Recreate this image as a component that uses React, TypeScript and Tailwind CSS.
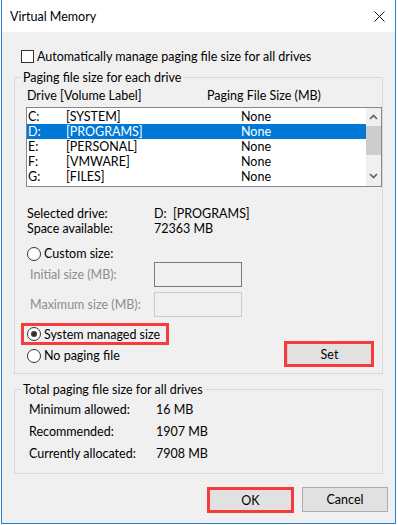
import React from "react";

const Radio = ({ checked }: { checked?: boolean }) => (
  <span className="flex items-center justify-center w-[14px] h-[14px] rounded-full border border-[#333333] bg-white shrink-0">
    {checked && <span className="w-[6px] h-[6px] rounded-full bg-[#333333]" />}
  </span>
);

const Chevron = ({ up }: { up?: boolean }) => (
  <svg width="9" height="6" viewBox="0 0 9 6" className="block">
    <path
      d={up ? "M1 5 L4.5 1.5 L8 5" : "M1 1 L4.5 4.5 L8 1"}
      fill="none"
      stroke="#606060"
      strokeWidth="1.6"
    />
  </svg>
);

const drives = [
  { d: "C:", label: "[SYSTEM]" },
  { d: "D:", label: "[PROGRAMS]" },
  { d: "E:", label: "[PERSONAL]" },
  { d: "F:", label: "[VMWARE]" },
  { d: "G:", label: "[FILES]" },
];

export default function App() {
  return (
    <div className="w-[398px] h-[525px] bg-white font-['Lato',sans-serif] text-[12.5px] leading-[15px] text-black">
      <div className="ml-[1px] w-[395px] h-[524px] border-x border-b border-[#2a7fd4] flex flex-col bg-[#f0f0f0]">
        {/* title bar */}
        <div className="h-[32px] bg-white flex items-center justify-between pl-[8px] pr-[8px] shrink-0">
          <span>Virtual Memory</span>
          <svg width="11" height="11" viewBox="0 0 11 11" className="mr-[2px]">
            <path d="M0.5 0.5 L10.5 10.5 M10.5 0.5 L0.5 10.5" stroke="#111" strokeWidth="1" />
          </svg>
        </div>

        {/* auto manage */}
        <div className="mt-[18px] ml-[19px] flex items-center h-[13px]">
          <span className="w-[13px] h-[13px] border border-[#333333] bg-white" />
          <span className="ml-[3px]">Automatically manage paging file size for all drives</span>
        </div>

        {/* group 1 */}
        <div className="relative mt-[14px] ml-[12px] w-[369px] h-[297px] border border-[#d9d9d9] flex flex-col">
          <span className="absolute left-[6px] -top-[8px] px-[2px] bg-[#f0f0f0]">
            Paging file size for each drive
          </span>

          <div className="pt-[10px] pl-[12px] flex">
            <span className="w-[33px]">Drive</span>
            <span className="w-[147px]">[Volume Label]</span>
            <span>Paging File Size (MB)</span>
          </div>

          <div className="mt-[4px] ml-[11px] w-[356px] h-[80px] border border-[#828790] bg-white flex">
            <div className="flex-1 pt-[1px]">
              {drives.map((r, i) => (
                <div
                  key={r.d}
                  className={
                    i === 1
                      ? "flex h-[15px] pl-[1px] bg-[#0078d7] text-white"
                      : "flex h-[15px] pl-[1px]"
                  }
                >
                  <span className="w-[38px]">{r.d}</span>
                  <span className="w-[175px]">{r.label}</span>
                  <span>None</span>
                </div>
              ))}
            </div>
            <div className="w-[15px] bg-[#f0f0f0] flex flex-col items-center">
              <div className="h-[18px] flex items-center justify-center">
                <Chevron up />
              </div>
              <div className="w-[15px] h-[29px] bg-[#cdcdcd]" />
              <div className="flex-1 flex items-end justify-center pb-[7px]">
                <Chevron />
              </div>
            </div>
          </div>

          <div className="mt-[19px] pl-[12px] flex">
            <span className="w-[127px]">Selected drive:</span>
            <span>D:&nbsp;&nbsp;[PROGRAMS]</span>
          </div>
          <div className="pl-[12px] flex">
            <span className="w-[127px]">Space available:</span>
            <span>72363 MB</span>
          </div>

          <div className="mt-[10px] pl-[12px] flex items-center gap-[3px] h-[15px]">
            <Radio />
            <span>Custom size:</span>
          </div>

          <div className="mt-[1px] pl-[15px] flex items-center h-[25px] text-[#8d8d8d]">
            <span className="w-[124px]">Initial size (MB):</span>
            <span className="w-[88px] h-[25px] border border-[#7a7a7a] bg-[#f0f0f0]" />
          </div>
          <div className="mt-[5px] pl-[15px] flex items-center h-[25px] text-[#8d8d8d]">
            <span className="w-[124px]">Maximum size (MB):</span>
            <span className="w-[88px] h-[25px] border border-[#cccccc] bg-[#f0f0f0]" />
          </div>

          <div className="mt-[6px] flex justify-between pr-[8px]">
            <div className="flex flex-col">
              <div className="ml-[6px] w-[148px] h-[22px] border-[3px] border-[#f53b3b] flex items-center gap-[3px] pl-[3px]">
                <Radio checked />
                <span>System managed size</span>
              </div>
              <div className="mt-[3px] pl-[12px] flex items-center gap-[3px] h-[15px]">
                <Radio />
                <span>No paging file</span>
              </div>
            </div>
            <div className="mt-[18px] w-[90px] h-[26px] border-[3px] border-[#f53b3b] bg-[#e1e1e1] flex items-center justify-center">
              <span className="w-full h-full border-l border-[#cfcfcf] flex items-center justify-center">
                Set
              </span>
            </div>
          </div>
        </div>

        {/* group 2 */}
        <div className="relative mt-[15px] ml-[12px] w-[369px] h-[85px] border border-[#d9d9d9] flex flex-col gap-[7px] pt-[12px] pl-[14px]">
          <span className="absolute left-[6px] -top-[8px] px-[2px] bg-[#f0f0f0]">
            Total paging file size for all drives
          </span>
          <div className="flex">
            <span className="w-[127px]">Minimum allowed:</span>
            <span>16 MB</span>
          </div>
          <div className="flex">
            <span className="w-[127px]">Recommended:</span>
            <span>1907 MB</span>
          </div>
          <div className="flex">
            <span className="w-[127px]">Currently allocated:</span>
            <span>7908 MB</span>
          </div>
        </div>

        {/* buttons */}
        <div className="mt-[13px] flex justify-end gap-[8px] pr-[7px]">
          <div className="w-[87px] h-[26px] border-[3px] border-[#f53b3b] bg-[#e1e1e1] flex items-center justify-center">
            OK
          </div>
          <div className="w-[86px] h-[25px] border border-[#adadad] bg-[#e1e1e1] flex items-center justify-center">
            Cancel
          </div>
        </div>
      </div>
    </div>
  );
}
